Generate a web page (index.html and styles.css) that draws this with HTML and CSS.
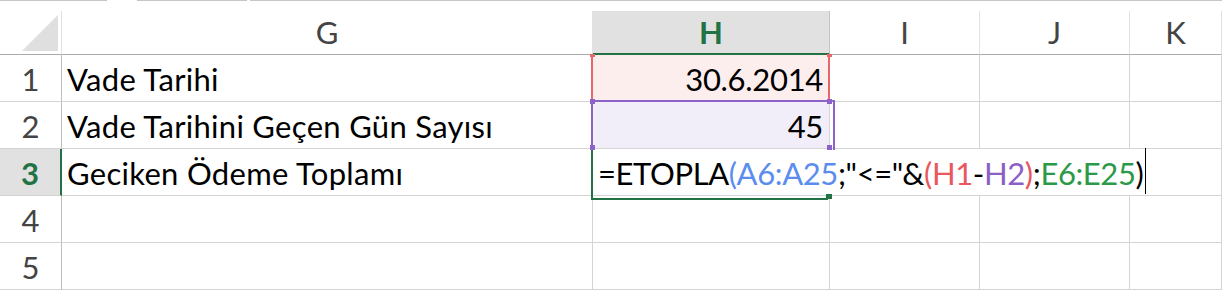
FILE: index.html
```html
<!DOCTYPE html>
<html lang="tr">
<head>
    <meta charset="UTF-8">
    <title>ETOPLA</title>
    <link rel="stylesheet" href="styles.css">
</head>
<body>
    <div class="topbar">
        <span class="seg seg-a"></span>
        <span class="seg seg-b"></span>
        <span class="seg seg-c"></span>
    </div>

    <div class="sheet">
        <!-- column headers -->
        <div class="corner">
            <svg width="36" height="36" viewBox="0 0 36 36"><polygon points="36,0 36,36 0,36" fill="#dfdfdf"/></svg>
        </div>
        <div class="col-head">G</div>
        <div class="col-head selected">H</div>
        <div class="col-head">I</div>
        <div class="col-head">J</div>
        <div class="col-head">K</div>

        <!-- row 1 -->
        <div class="row-head">1</div>
        <div class="cell">Vade Tarihi</div>
        <div class="cell num ref-red">30.6.2014</div>
        <div class="cell"></div>
        <div class="cell"></div>
        <div class="cell"></div>

        <!-- row 2 -->
        <div class="row-head">2</div>
        <div class="cell">Vade Tarihini Geçen Gün Sayısı</div>
        <div class="cell num ref-purple">45</div>
        <div class="cell"></div>
        <div class="cell"></div>
        <div class="cell"></div>

        <!-- row 3 -->
        <div class="row-head selected">3</div>
        <div class="cell">Geciken Ödeme Toplamı</div>
        <div class="cell active">
            <div class="editor">
                <span>=ETOPLA</span><span class="c-blue">(A6:A25</span><span>;"&lt;="&amp;</span><span class="c-red">(H1</span><span>-</span><span class="c-purple">H2</span><span class="c-red">)</span><span>;</span><span class="c-green">E6:E25</span><span>)</span><span class="caret"></span>
            </div>
        </div>
        <div class="cell"></div>
        <div class="cell"></div>
        <div class="cell"></div>

        <!-- row 4 -->
        <div class="row-head">4</div>
        <div class="cell"></div>
        <div class="cell"></div>
        <div class="cell"></div>
        <div class="cell"></div>
        <div class="cell"></div>

        <!-- row 5 -->
        <div class="row-head">5</div>
        <div class="cell"></div>
        <div class="cell"></div>
        <div class="cell"></div>
        <div class="cell"></div>
        <div class="cell"></div>
    </div>
</body>
</html>
```

FILE: styles.css
```css
* {
    box-sizing: border-box;
}

body {
    margin: 0;
    background: #fff;
    font-family: Lato, "Open Sans", sans-serif;
    font-size: 31px;
    color: #000;
    overflow: hidden;
}

.topbar {
    display: flex;
    height: 11px;
}

.seg {
    height: 1px;
    background: #c6c6c6;
}

.seg-a { width: 107px; }
.seg-b { width: 110px; margin-left: 30px; }
.seg-c { flex: 1; margin-left: 3px; }

.sheet {
    display: grid;
    grid-template-columns: 62px 531px 237px 150px 150px 1fr;
    grid-template-rows: 44px repeat(5, 47px);
}

.corner {
    display: flex;
    justify-content: flex-end;
    padding: 4px 3px 0 0;
    border-right: 1px solid #e2e2e2;
    border-bottom: 1px solid #ababab;
}

.col-head {
    display: flex;
    justify-content: center;
    align-items: flex-end;
    padding-bottom: 3px;
    line-height: 1.2;
    color: #444;
    border-right: 1px solid #e2e2e2;
    border-bottom: 1px solid #ababab;
}

.col-head.selected {
    background: #e1e1e1;
    color: #217346;
    font-weight: bold;
    border-right-color: #c4c4c4;
    border-bottom: 2px solid #217346;
    padding-bottom: 2px;
}

.row-head {
    display: flex;
    justify-content: center;
    align-items: flex-end;
    padding-bottom: 3px;
    line-height: 1.2;
    color: #444;
    border-right: 1px solid #bdbdbd;
    border-bottom: 1px solid #d4d4d4;
}

.row-head.selected {
    background: #e1e1e1;
    color: #217346;
    font-weight: bold;
    border-right: 2px solid #217346;
}

.cell {
    position: relative;
    display: flex;
    align-items: flex-end;
    padding: 0 5px 3px 5px;
    line-height: 1.2;
    letter-spacing: 0.3px;
    white-space: nowrap;
    border-right: 1px solid #d4d4d4;
    border-bottom: 1px solid #d4d4d4;
}

.cell.num {
    justify-content: flex-end;
    padding-right: 6px;
    letter-spacing: -0.3px;
}

/* H1: red reference range */
.ref-red {
    background: #fdeeee;
    z-index: 1;
}

.ref-red::before {
    content: "";
    position: absolute;
    left: -2px;
    right: -1px;
    top: 0;
    bottom: 0;
    border-left: 2px solid #e8676b;
    border-right: 2px solid #e8676b;
}

.ref-red::after {
    content: "";
    position: absolute;
    left: -3px;
    top: -1px;
    width: 5px;
    height: 3px;
    background: #e8676b;
    box-shadow: 237px 0 0 #e8676b;
}

/* H2: purple reference range */
.ref-purple {
    background: #f1eef9;
    z-index: 3;
}

.ref-purple::before {
    content: "";
    position: absolute;
    left: -2px;
    top: -2px;
    width: 240px;
    height: 48px;
    border: 2px solid #8e63c9;
    border-bottom: none;
}

.ref-purple::after {
    content: "";
    position: absolute;
    left: -3px;
    top: -3px;
    width: 5px;
    height: 5px;
    background: #8e63c9;
    box-shadow: 237px 0 0 #8e63c9, 0 46px 0 #8e63c9, 237px 46px 0 #8e63c9;
}

/* H3: cell in edit mode, text runs over I and J */
.cell.active {
    padding: 0;
    border-right-color: #fff;
    z-index: 2;
}

.cell.active::before {
    content: "";
    position: absolute;
    left: -2px;
    top: -2px;
    width: 235px;
    height: 49px;
    border: 2px solid #217346;
    border-right: none;
    z-index: 1;
}

.cell.active::after {
    content: "";
    position: absolute;
    left: 233px;
    top: 45px;
    width: 6px;
    height: 5px;
    background: #217346;
}

.editor {
    display: flex;
    align-items: flex-end;
    flex-shrink: 0;
    width: max-content;
    min-width: 100%;
    height: 100%;
    padding: 0 4px 3px 5px;
    letter-spacing: -0.4px;
    background: #fff;
}

.caret {
    flex-shrink: 0;
    align-self: stretch;
    width: 1px;
    margin: -1px 0 -2px 2px;
    background: #000;
}

.c-blue { color: #5b8def; }
.c-red { color: #e8585e; }
.c-purple { color: #8b5fc6; }
.c-green { color: #2b9a48; }
```
